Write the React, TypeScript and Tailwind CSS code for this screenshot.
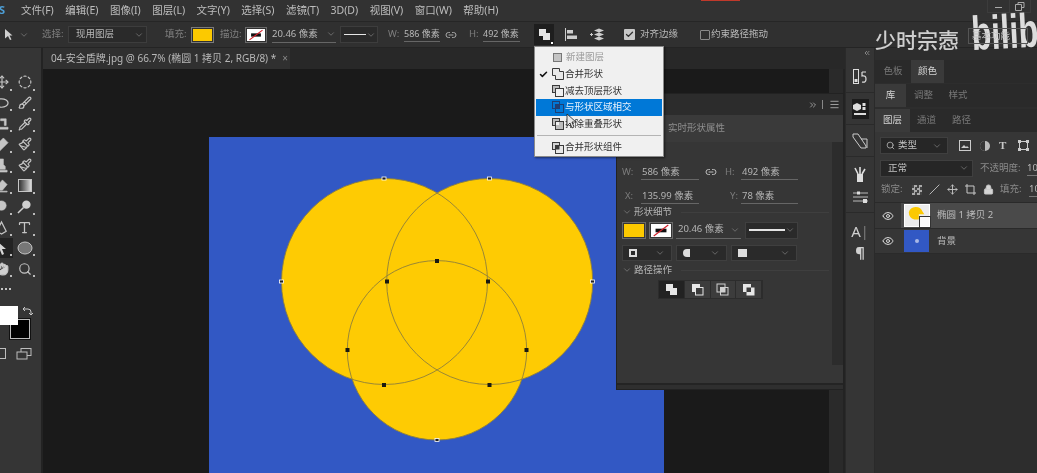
import React from "react";
import {
  Brush,
  ChevronDown,
  CircleDashed,
  Hand,
  Link2,
  Menu,
  Paintbrush,
  Pipette,
  Search,
  Type,
  Eye,
  Lock,
  Move,
  ChevronsRight,
  ChevronsLeft,
  Check,
  Slash,
} from "lucide-react";

const menus = ["文件(F)", "编辑(E)", "图像(I)", "图层(L)", "文字(Y)", "选择(S)", "滤镜(T)", "3D(D)", "视图(V)", "窗口(W)", "帮助(H)"];

function Chev({ className = "" }: { className?: string }) {
  return <ChevronDown size={10} strokeWidth={1.5} className={`text-[#8c8c8c] shrink-0 ${className}`} />;
}

function StrokeSwatch({ className = "" }: { className?: string }) {
  return (
    <div className={`border border-[#6a6a6a] p-[1px] ${className}`}>
      <svg viewBox="0 0 22 14" className="w-full h-full bg-white block">
        <rect x="5" y="5" width="12" height="4" fill="#111" />
        <line x1="3" y1="13" x2="19" y2="1" stroke="#d3202a" strokeWidth="1.3" />
      </svg>
    </div>
  );
}

function MenuIcon({ mode }: { mode: string }) {
  const s = "#3a3a3a";
  return (
    <svg width="12" height="12" viewBox="0 0 12 12" className="shrink-0">
      {mode === "new" && <rect x="1.5" y="1.5" width="8" height="8" fill="#c4c4c4" stroke="#777" />}
      {mode === "unite" && <path d="M.5.5h7v3h4v8h-8v-4h-3z" fill="#e8e8e8" stroke={s} />}
      {mode === "sub" && (
        <>
          <rect x=".5" y=".5" width="7" height="7" fill="#bdbdbd" stroke={s} />
          <rect x="3.5" y="3.5" width="8" height="8" fill="#f0f0f0" stroke={s} />
        </>
      )}
      {mode === "int" && (
        <>
          <rect x=".5" y=".5" width="7" height="7" fill="none" stroke="#1f3f74" />
          <rect x="3.5" y="3.5" width="8" height="8" fill="none" stroke="#1f3f74" />
          <rect x="3.5" y="3.5" width="4" height="4" fill="#1f3f74" />
        </>
      )}
      {mode === "exc" && (
        <>
          <rect x=".5" y=".5" width="7" height="7" fill="#bdbdbd" stroke={s} />
          <rect x="3.5" y="3.5" width="8" height="8" fill="#bdbdbd" stroke={s} />
          <rect x="4" y="4" width="3" height="3" fill="#f0f0f0" />
        </>
      )}
      {mode === "merge" && (
        <>
          <rect x=".5" y=".5" width="7" height="7" fill="#d4d4d4" stroke={s} />
          <rect x="3.5" y="3.5" width="8" height="8" fill="#e8e8e8" stroke={s} />
          <rect x="3.5" y="3.5" width="4" height="4" fill={s} />
        </>
      )}
    </svg>
  );
}

function PathOp({ mode, active }: { mode: string; active?: boolean }) {
  return (
    <div className={`w-[26px] h-full flex items-center justify-center border-r border-[#2c2c2c] ${active ? "bg-[#222222]" : "bg-[#3c3c3c]"}`}>
      <svg width="13" height="13" viewBox="0 0 13 13">
        {mode === "unite" && <path d="M1 1h7v4h4v7H5V8H1z" fill="#e6e6e6" />}
        {mode === "sub" && (
          <>
            <rect x="1" y="1" width="8" height="8" fill="#e6e6e6" />
            <rect x="4.5" y="4.5" width="7.5" height="7.5" fill="#3c3c3c" stroke="#e6e6e6" />
          </>
        )}
        {mode === "int" && (
          <>
            <rect x="1" y="1" width="8" height="8" fill="none" stroke="#d0d0d0" />
            <rect x="4.5" y="4.5" width="7.5" height="7.5" fill="none" stroke="#d0d0d0" />
            <rect x="4.5" y="4.5" width="4.5" height="4.5" fill="#d0d0d0" />
          </>
        )}
        {mode === "exc" && (
          <>
            <path d="M1 1h8v3.5H4.500v4.500H1z" fill="#e6e6e6" />
            <path d="M9 4.500h3.500v8h-8V9H9z" fill="#e6e6e6" />
          </>
        )}
      </svg>
    </div>
  );
}

function ValueField({ label, value, labelW, fieldW }: { label: string; value: string; labelW: string; fieldW: string }) {
  return (
    <div className="flex items-center">
      <span className={`text-[#7c7c7c] ${labelW}`}>{label}</span>
      <span className={`border-b border-[#666] text-[#b4b4b4] h-[15px] leading-[14px] pl-[1px] whitespace-nowrap ${fieldW}`}>{value}</span>
    </div>
  );
}

function Section({ title }: { title: string }) {
  return (
    <div className="flex items-center h-[14px] gap-[1px] text-[#b4b4b4]">
      <Chev />
      <span className="ml-[1px]">{title}</span>
      <div className="flex-1 border-t border-[#3f3f3f] ml-2" />
    </div>
  );
}

function Tabs({ items, active, widths }: { items: string[]; active: number; widths: string[] }) {
  return (
    <div className="flex h-[23px] bg-[#2a2a2a]">
      {items.map((t, i) => (
        <div key={t} className={`flex items-center justify-center ${widths[i]} ${i === active ? "bg-[#3a3a3a] text-[#d4d4d4]" : "text-[#777]"}`}>
          {t}
        </div>
      ))}
    </div>
  );
}

function Tool({ children, active }: { children?: React.ReactNode; active?: boolean }) {
  return (
    <div className={`h-[20.7px] w-[23px] flex items-center justify-center text-[#c4c4c4] relative ${active ? "bg-[#232323]" : ""}`}>
      {children}
      <span className="absolute right-[1px] bottom-[2px] w-[2px] h-[2px] bg-[#bbb]" />
    </div>
  );
}

function Shape({ d }: { d: string }) {
  return (
    <svg width="15" height="15" viewBox="0 0 16 16">
      <path d={d} fill="#c6c6c6" stroke="#c6c6c6" strokeWidth="0.6" />
    </svg>
  );
}

function LeftToolbar() {
  return (
    <div className="w-[43px] bg-[#353535] border-r-2 border-[#232323] shrink-0 overflow-hidden relative pt-[24px]">
      <div className="grid grid-cols-[23px_23px] -ml-[10px] gap-x-0 w-[46px]">
        <Tool><Move size={14} /></Tool>
        <Tool><CircleDashed size={14} /></Tool>
        <Tool>
          <svg width="15" height="13" viewBox="0 0 16 13">
            <ellipse cx="8" cy="6" rx="7" ry="4.500" fill="none" stroke="#c6c6c6" strokeWidth="1.3" />
          </svg>
        </Tool>
        <Tool><Brush size={14} /></Tool>
        <Tool><Shape d="M4 1v11h11v2H2V3H0V1h4zm3 2h6v7h-2V5H7z" /></Tool>
        <Tool><Pipette size={14} /></Tool>
        <Tool><Shape d="M10 1l5 5-9 9-5-5z" /></Tool>
        <Tool><Paintbrush size={14} /></Tool>
        <Tool><Shape d="M6 1h4v6l2 2v3H4V9l2-2zM2 13h12v2H2z" /></Tool>
        <Tool><Paintbrush size={14} /></Tool>
        <Tool><Shape d="M9 2l5 5-5 6H5L2 10zM2 14h12v1H2z" /></Tool>
        <Tool>
          <div className="w-[14px] h-[13px] border border-[#c6c6c6] bg-gradient-to-r from-[#333] to-[#ddd]" />
        </Tool>
        <Tool><Shape d="M8 2a5 5 0 0 1 5 5 5 5 0 0 1-5 5 5 5 0 0 1-5-5 5 5 0 0 1 5-5z" /></Tool>
        <Tool>
          <svg width="15" height="15" viewBox="0 0 16 16">
            <circle cx="10" cy="6" r="4.500" fill="#d0d0d0" />
            <line x1="7" y1="9" x2="1" y2="15" stroke="#d0d0d0" strokeWidth="1.6" />
          </svg>
        </Tool>
        <Tool>
          <svg width="15" height="15" viewBox="0 0 16 16">
            <path d="M3 12L8 2l5 10-5 3z" fill="none" stroke="#c6c6c6" strokeWidth="1.3" />
          </svg>
        </Tool>
        <Tool><Type size={15} /></Tool>
        <Tool active>
          <svg width="13" height="14" viewBox="0 0 13 14">
            <path d="M3 1l8 7H7l2 5-2 1-2-5-2 3z" fill="#d6d6d6" />
          </svg>
        </Tool>
        <Tool>
          <svg width="16" height="14" viewBox="0 0 16 14">
            <ellipse cx="8" cy="7" rx="7" ry="6" fill="#777" stroke="#c6c6c6" />
          </svg>
        </Tool>
        <Tool><Hand size={14} fill="#d0d0d0" /></Tool>
        <Tool><Search size={14} /></Tool>
        <div className="h-[20px] w-[23px] flex items-center justify-end gap-[2px] pr-[2px]">
          <span className="w-[2px] h-[2px] bg-[#c4c4c4]" />
          <span className="w-[2px] h-[2px] bg-[#c4c4c4]" />
          <span className="w-[2px] h-[2px] bg-[#c4c4c4]" />
        </div>
      </div>
      {/* foreground / background colours */}
      <div className="relative h-[33px] mt-[7px]">
        <div className="absolute left-[10px] top-[13px] w-[20px] h-[20px] bg-black border border-[#bbb] outline outline-[#111]" />
        <div className="absolute left-0 top-0 w-[18px] h-[19px] bg-white" />
        <svg className="absolute left-[22px] top-0" width="11" height="11" viewBox="0 0 11 11">
          <path d="M1 3h5q3 0 3 3v3M1 3l2-2M1 3l2 2M9 9l-2-2M9 9l2-2" fill="none" stroke="#c8c8c8" />
        </svg>
      </div>
      <div className="flex items-center justify-between mt-[8px] pr-[9px]">
        <div className="w-[6px] h-[11px] border border-l-0 border-[#bdbdbd]" />
        <svg width="16" height="14" viewBox="0 0 16 14">
          <rect x="5" y="1.500" width="10" height="7" fill="none" stroke="#bdbdbd" />
          <rect x="1" y="5" width="10" height="7" fill="#353535" stroke="#bdbdbd" />
        </svg>
      </div>
    </div>
  );
}

function DockIcon({ children, active, line }: { children: React.ReactNode; active?: boolean; line?: boolean }) {
  return (
    <div className={`flex items-center justify-center h-[32px] ${line ? "border-b border-[#2a2a2a]" : ""}`}>
      <div className={`flex items-center justify-center text-[#cfcfcf] ${active ? "bg-[#1c1c1c] w-[17px] h-[20px]" : "w-[16px] h-[18px]"}`}>{children}</div>
    </div>
  );
}

function Dock() {
  return (
    <div className="w-[30px] bg-[#353535] border-l border-r border-[#2a2a2a] shrink-0 pt-[13px] text-[11px] relative">
      <ChevronsLeft size={8} className="absolute right-[3px] top-[1px] text-[#aaa]" />
      <DockIcon line>
        <svg width="14" height="15" viewBox="0 0 14 15">
          <rect x="0.500" y="0.500" width="5" height="14" fill="none" stroke="#ddd" />
          <rect x="1.500" y="10" width="3" height="3" fill="#ddd" />
          <path d="M9 3h4M9 3v4q4-1 4 3t-4 3" fill="none" stroke="#ddd" strokeWidth="1.2" />
        </svg>
      </DockIcon>
      <DockIcon active line>
        <svg width="14" height="14" viewBox="0 0 14 14">
          <path d="M4 1l4 2v4L4 9 0 7V3z" fill="#ddd" />
          <rect x="9.500" y="1" width="3" height="3" fill="#ddd" />
          <rect x="9.500" y="5" width="3" height="3" fill="#ddd" />
          <rect x="1" y="11" width="12" height="2" fill="#ddd" />
        </svg>
      </DockIcon>
      <DockIcon line>
        <svg width="16" height="16" viewBox="0 0 16 16">
          <path d="M1 1h5l8 12v2H9L1 4zM9 6h6v9" fill="none" stroke="#ccc" />
        </svg>
      </DockIcon>
      <div className="h-[56px] border-b border-[#2a2a2a] flex flex-col items-center justify-center gap-[8px]">
        <svg width="14" height="17" viewBox="0 0 14 17">
          <rect x="4" y="8" width="6" height="8" fill="#ddd" />
          <path d="M5 8L2 2M7 8V1M9 8l3-5" stroke="#ddd" strokeWidth="1.6" />
        </svg>
        <svg width="15" height="12" viewBox="0 0 15 12">
          <path d="M0 2h15M0 6h15M0 10h15" stroke="#bbb" />
          <rect x="4" y="0.500" width="3" height="3" fill="#ddd" />
          <rect x="10" y="8" width="4" height="4" fill="#ddd" />
        </svg>
      </div>
      <div className="h-[27px] flex items-center justify-center text-[#d0d0d0] text-[15px] mt-[5px]">A<span className="font-light text-[#999]">|</span></div>
      <div className="flex items-center justify-center text-[#d0d0d0] text-[15px] font-bold -mt-[4px]">¶</div>
    </div>
  );
}

function RightPanel() {
  return (
    <div className="flex-1 bg-[#2d2d2d] text-[9.5px] pt-[12px] overflow-hidden">
      <Tabs items={["色板", "颜色"]} active={1} widths={["w-[36px]", "w-[33px]"]} />
      <div className="h-[1px]" />
      <Tabs items={["库", "调整", "样式"]} active={0} widths={["w-[31px]", "w-[35px]", "w-[34px]"]} />
      <div className="h-[2px]" />
      <Tabs items={["图层", "通道", "路径"]} active={0} widths={["w-[35px]", "w-[33px]", "w-[37px]"]} />
      <div className="bg-[#363636] w-[200px]">
        <div className="h-[27px] flex items-center pl-[5px]">
          <div className="w-[68px] h-[17px] bg-[#262626] border border-[#3f3f3f] flex items-center px-[5px] text-[#c2c2c2] gap-[3px]">
            <Search size={9} />
            <span className="flex-1">类型</span>
            <Chev />
          </div>
          <div className="flex items-center gap-[7px] ml-[11px] text-[#c8c8c8]">
            <svg width="12" height="11" viewBox="0 0 12 11">
              <rect x=".5" y=".5" width="11" height="10" fill="none" stroke="#ccc" />
              <path d="M2 8l3-3 2 2 1-1 2 2z" fill="#ccc" />
            </svg>
            <svg width="12" height="12" viewBox="0 0 12 12" className="ml-[1px]">
              <circle cx="6" cy="6" r="5" fill="#bbb" />
              <path d="M6 1a5 5 0 0 0 0 10z" fill="#363636" />
            </svg>
            <span className="font-bold text-[11px] leading-none ml-[1px] w-[12px] font-['Liberation_Serif',serif]">T</span>
            <svg width="11" height="11" viewBox="0 0 11 11">
              <rect x="1.500" y="1.500" width="8" height="8" fill="none" stroke="#ccc" />
              <rect x="0" y="0" width="3" height="3" fill="#ccc" />
              <rect x="8" y="0" width="3" height="3" fill="#ccc" />
              <rect x="0" y="8" width="3" height="3" fill="#ccc" />
              <rect x="8" y="8" width="3" height="3" fill="#ccc" />
            </svg>
          </div>
        </div>
        <div className="h-[18px] flex items-center pl-[5px]">
          <div className="w-[93px] h-[17px] bg-[#262626] border border-[#3f3f3f] flex items-center pl-[7px] pr-[3px] text-[#c2c2c2]">
            <span className="flex-1">正常</span>
            <Chev />
          </div>
          <span className="ml-[7px] text-[#8a8a8a] w-[47px]">不透明度:</span>
          <span className="text-[#b8b8b8] border-b border-[#777] w-[24px] leading-[14px]">100%</span>
        </div>
        <div className="h-[25px] flex items-center pl-[6px] text-[#8a8a8a]">
          <span className="w-[31px]">锁定:</span>
          <div className="flex items-center gap-[7px] text-[#c4c4c4]">
            <div className="w-[10px] h-[10px] bg-[repeating-conic-gradient(#aaa_0_25%,#444_0_50%)] bg-[length:5px_5px]" />
            <Slash size={11} />
            <Move size={11} />
            <svg width="11" height="11" viewBox="0 0 11 11">
              <path d="M2 0v9h9M0 2h9v9" fill="none" stroke="#c8c8c8" />
            </svg>
            <Lock size={11} fill="#d4d4d4" />
          </div>
          <span className="ml-[6px] w-[29px]">填充:</span>
          <span className="text-[#b8b8b8] border-b border-[#777] w-[24px] leading-[14px]">100%</span>
        </div>
        <div className="flex h-[26px] border-t border-[#2a2a2a]">
          <div className="w-[26px] flex items-center justify-center text-[#d8d8d8]"><Eye size={12} /></div>
          <div className="flex-1 bg-[#4a4a4a] flex items-center pl-[3px] text-[#bdbdbd]">
            <div className="w-[26px] h-[23px] border border-white bg-[#ececec] relative">
              <svg viewBox="0 0 26 23" className="w-full h-full">
                <path d="M4 8a8 8 0 0 1 15-1l2 3h-6v6h-5q-6-2-6-8z" fill="#fcc900" />
              </svg>
              <div className="absolute -right-[2px] -bottom-[2px] w-[12px] h-[12px] border border-[#333] bg-white/70" />
            </div>
            <span className="ml-[7px]">椭圆 1 拷贝 2</span>
          </div>
        </div>
        <div className="flex h-[26px] border-t border-b border-[#2a2a2a]">
          <div className="w-[26px] flex items-center justify-center text-[#d8d8d8]"><Eye size={12} /></div>
          <div className="flex-1 flex items-center pl-[3px] text-[#bdbdbd]">
            <div className="w-[25px] h-[22px] bg-[#3258c4] flex items-center justify-center">
              <span className="w-[4px] h-[4px] rounded-full bg-[#a9b8e6]" />
            </div>
            <span className="ml-[8px]">背景</span>
          </div>
        </div>
      </div>
    </div>
  );
}

function ShapeMenu() {
  const items = [
    { t: "合并形状", m: "unite", check: true },
    { t: "减去顶层形状", m: "sub" },
    { t: "与形状区域相交", m: "int", on: true },
    { t: "排除重叠形状", m: "exc" },
  ];
  return (
    <div className="absolute left-[534px] top-[46px] w-[130px] h-[111px] z-20 bg-[#f0f0f0] border border-[#8a8a8a] px-[1px] pt-[2px] text-[9.5px] text-[#333] shadow-[1px_1px_2px_rgba(0,0,0,0.5)]">
      <div className="h-[17px] flex items-center pl-[16px] gap-[1px] text-[#9a9a9a]">
        <MenuIcon mode="new" />
        <span className="ml-[1px]">新建图层</span>
      </div>
      {items.map((it) => (
        <div key={it.t} className={`h-[16.5px] flex items-center pl-[16px] relative ${it.on ? "bg-[#0078d7] text-[#e8f2fb]" : ""}`}>
          {it.check && <Check size={9} strokeWidth={4} className="absolute left-[3px] text-[#111]" />}
          <MenuIcon mode={it.m} />
          <span className="ml-[1px]">{it.t}</span>
        </div>
      ))}
      <div className="border-t border-[#b4b4b4] mx-[1px] mt-[3px] mb-[3px]" />
      <div className="h-[17px] flex items-center pl-[16px]">
        <MenuIcon mode="merge" />
        <span className="ml-[1px]">合并形状组件</span>
      </div>
    </div>
  );
}

function PropsPanel() {
  return (
    <div className="absolute left-[616px] top-[93px] w-[228px] h-[297px] z-10 bg-[#363636] border border-[#222] text-[9.5px] flex flex-col">
      <div className="h-[21px] bg-[#2c2c2c] flex items-center justify-end pr-[3px] gap-[4px] text-[#aaa] shrink-0">
        <ChevronsRight size={10} />
        <span className="w-[1px] h-[9px] bg-[#888]" />
        <Menu size={11} className="ml-[2px]" />
      </div>
      <div className="h-[27px] bg-[#3a3a3a] flex items-center pl-[51px] text-[#8e8e8e] shrink-0">实时形状属性</div>
      <div className="flex flex-1 min-h-0">
        <div className="flex-1 pl-[5px] pr-[3px] pt-[21px]">
          <div className="flex flex-col">
            <div className="flex items-center h-[18px]">
              <ValueField label="W:" value="586 像素" labelW="w-[19px]" fieldW="w-[58px]" />
              <Link2 size={12} className="text-[#bdbdbd] ml-[6px]" />
              <div className="ml-[8px]">
                <ValueField label="H:" value="492 像素" labelW="w-[16px]" fieldW="w-[57px]" />
              </div>
            </div>
            <div className="flex items-center h-[18px] mt-[6px]">
              <ValueField label="X:" value="135.99 像素" labelW="w-[19px] pl-[3px]" fieldW="w-[58px]" />
              <div className="w-[28px]" />
              <ValueField label="Y:" value="78 像素" labelW="w-[14px] pl-[3px]" fieldW="w-[57px]" />
            </div>
            <Section title="形状细节" />
            <div className="flex items-center mt-[2px] h-[18px]">
              <div className="w-[24px] h-[17px] border border-[#6a6a6a] p-[1px]"><div className="w-full h-full bg-[#fcc900]" /></div>
              <StrokeSwatch className="w-[24px] h-[17px] ml-[3px]" />
              <div className="w-[65px] h-[17px] ml-[3px] border-b border-[#666] flex items-center pl-[2px] pr-[1px] text-[#b4b4b4]">
                <span className="flex-1">20.46 像素</span>
                <Chev />
              </div>
              <div className="w-[53px] h-[17px] ml-[4px] bg-[#2a2a2a] border border-[#3f3f3f] flex items-center pl-[3px] pr-[2px]">
                <div className="flex-1 h-[1.5px] bg-[#e4e4e4]" />
                <Chev />
              </div>
            </div>
            <div className="flex items-center mt-[6px] h-[16px] gap-[4px]">
              <div className="w-[50px] h-[16px] bg-[#2a2a2a] border border-[#3f3f3f] flex items-center px-[6px] justify-between">
                <span className="w-[8px] h-[8px] border-2 border-[#ddd]" />
                <Chev />
              </div>
              <div className="w-[51px] h-[16px] bg-[#2a2a2a] border border-[#3f3f3f] flex items-center px-[6px] justify-between">
                <span className="w-[7px] h-[8px] bg-[#ddd] rounded-l-sm" />
                <Chev />
              </div>
              <div className="w-[66px] h-[16px] bg-[#2a2a2a] border border-[#3f3f3f] flex items-center px-[6px] justify-between">
                <span className="w-[9px] h-[8px] bg-[#ddd]" />
                <Chev />
              </div>
            </div>
            <div className="mt-[2px]"><Section title="路径操作" /></div>
            <div className="flex h-[19px] w-[105px] ml-[36px] mt-[3px] border border-[#2c2c2c]">
              <PathOp mode="unite" active />
              <PathOp mode="sub" />
              <PathOp mode="int" />
              <PathOp mode="exc" />
            </div>
          </div>
        </div>
        <div className="w-[11px] h-[223px] bg-[#2c2c2c] shrink-0" />
      </div>
      <div className="h-[6px] bg-[#2f2f2f] border-t-2 border-[#242424] shrink-0" />
    </div>
  );
}

function Circles() {
  const rings = [
    { cx: 384.5, cy: 281.500, r: 103 },
    { cx: 489.7, cy: 281.500, r: 103 },
    { cx: 437, cy: 350.300, r: 89.700 },
  ];
  const black = [[437, 261], [387, 281.500], [488, 281.500], [347.500, 350], [526.500, 350], [384, 385], [489.500, 385]];
  const white = [[384, 178.500], [489.500, 178.500], [281.500, 281.500], [592.500, 281.500], [437, 440]];
  return (
    <svg viewBox="209 137 455 336" className="w-[455px] h-[336px] block bg-[#3258c4]">
      {rings.map((c) => (
        <circle key={c.cx} cx={c.cx} cy={c.cy} r={c.r} fill="#fecb03" />
      ))}
      {rings.map((c) => (
        <circle key={c.cx} cx={c.cx} cy={c.cy} r={c.r} fill="none" stroke="#8d7f3c" strokeWidth="0.9" />
      ))}
      {black.map(([x, y]) => (
        <rect key={`${x}-${y}`} x={x - 2} y={y - 2} width="4" height="4" fill="#1a1a10" />
      ))}
      {white.map(([x, y]) => (
        <rect key={`${x}-${y}`} x={x - 2} y={y - 1.500} width="4" height="3" fill="#222" stroke="#fff" strokeWidth="0.8" />
      ))}
    </svg>
  );
}

export default function App() {
  return (
    <div className="w-[1037px] h-[473px] relative overflow-hidden flex flex-col bg-[#1a1a1a] font-['Noto_Sans','Noto_Sans_CJK_SC',sans-serif] blur-[0.3px]">
      {/* menu bar */}
      <div className="h-[22px] bg-[#323232] border-b border-[#262626] flex items-center text-[10.5px] text-[#bdbdbd] shrink-0 relative">
        <span className="text-[#4d9ed6] font-bold w-[21px] text-[11px] -ml-[1px]">S</span>
        <div className="flex gap-[11.5px] ml-[1px]">
          {menus.map((m) => (
            <span key={m}>{m}</span>
          ))}
        </div>
        <div className="absolute left-[701px] top-0 w-[39px] h-[1px] bg-[#c0392b]" />
        <div className="absolute right-[6px] top-0 flex h-[13px] border border-[#3c3c3c] border-t-0">
          <div className="w-[22px] flex items-center justify-center border-r border-[#3c3c3c]"><span className="w-[7px] h-[1.5px] bg-[#aaa] mt-[3px]" /></div>
          <div className="w-[20px] flex items-center justify-center">
            <svg width="10" height="9" viewBox="0 0 10 9"><path d="M3 2V.5h6v5H7M.5 2.500h6v6h-6z" fill="none" stroke="#aaa" /></svg>
          </div>
        </div>
      </div>

      {/* options bar */}
      <div className="h-[26px] bg-[#303030] border-b border-[#242424] flex items-center text-[9.5px] text-[#b8b8b8] shrink-0 relative">
        <svg width="10" height="13" viewBox="0 0 10 13" className="ml-[4px]">
          <path d="M1 1l7.500 6.500H5.500l2 4-1.500.5-2-4-3 2.500z" fill="#cfcfcf" />
        </svg>
        <Chev className="ml-[5px]" />
        <span className="ml-[13px] text-[#7e7e7e] w-[26px]">选择:</span>
        <div className="w-[79px] h-[17px] bg-[#2a2a2a] border border-[#3d3d3d] flex items-center pl-[7px] pr-[2px]">
          <span className="flex-1">现用图层</span>
          <Chev />
        </div>
        <span className="ml-[18px] text-[#7e7e7e] w-[26px]">填充:</span>
        <div className="w-[23px] h-[16px] border border-[#7a7a7a] p-[1px]"><div className="w-full h-full bg-[#fcc900]" /></div>
        <span className="ml-[6px] text-[#7e7e7e] w-[25px]">描边:</span>
        <StrokeSwatch className="w-[22px] h-[16px]" />
        <div className="ml-[5px] w-[64px] h-[16px] border-b border-[#666] flex items-center">
          <span className="flex-1">20.46 像素</span>
          <Chev />
        </div>
        <div className="ml-[4px] w-[38px] h-[17px] bg-[#2a2a2a] border border-[#3d3d3d] flex items-center pl-[3px] pr-[1px]">
          <div className="flex-1 h-[1.5px] bg-[#e6e6e6]" />
          <Chev />
        </div>
        <span className="ml-[10px] text-[#7e7e7e] w-[16px]">W:</span>
        <span className="w-[36px] border-b border-[#666] leading-[14px] whitespace-nowrap text-[9px]">586 像素</span>
        <Link2 size={12} className="ml-[5px] text-[#a8a8a8]" />
        <span className="ml-[12px] text-[#7e7e7e] w-[14px]">H:</span>
        <span className="w-[37px] border-b border-[#666] leading-[14px] whitespace-nowrap text-[9px]">492 像素</span>
        <div className="ml-[14px] w-[20px] h-[21px] bg-[#1e1e1e] flex items-center justify-center relative">
          <svg width="13" height="13" viewBox="0 0 13 13"><path d="M1 1h7v4h4v7H5V8H1z" fill="#e6e6e6" /></svg>
          <span className="absolute right-[1px] bottom-[1px] w-[2px] h-[2px] bg-white" />
        </div>
        <svg width="12" height="13" viewBox="0 0 12 13" className="ml-[11px]">
          <path d="M.5 0v13" stroke="#ccc" />
          <rect x="2" y="2" width="6" height="3.500" fill="#ccc" />
          <rect x="2" y="7.500" width="10" height="3.500" fill="#ccc" />
        </svg>
        <svg width="16" height="13" viewBox="0 0 16 13" className="ml-[13px]">
          <path d="M4 2.500l5-2 5 2-5 2zM4 6.500l5-2 5 2-5 2zM4 10.500l5-2 5 2-5 2z" fill="#ccc" />
          <path d="M0 6.500h3M1.500 5v3" stroke="#ccc" />
        </svg>
        <div className="ml-[18px] w-[11px] h-[11px] bg-[#c8c8c8] rounded-[1px] flex items-center justify-center">
          <Check size={9} strokeWidth={3.500} className="text-[#303030]" />
        </div>
        <span className="ml-[5px] w-[60px]">对齐边缘</span>
        <div className="w-[10px] h-[10px] border border-[#8a8a8a] rounded-[1px]" />
        <span className="ml-[1px]">约束路径拖动</span>
      </div>

      {/* main */}
      <div className="flex-1 flex min-h-0">
        <LeftToolbar />
        <div className="w-[802px] flex flex-col shrink-0">
          <div className="h-[21px] bg-[#282828] flex shrink-0">
            <div className="w-[247px] bg-[#303030] flex items-center pl-[8px] text-[10px] text-[#b8b8b8] whitespace-nowrap">
              <span>04-安全盾牌.jpg @ 66.7% (椭圆 1 拷贝 2, RGB/8) *</span>
              <span className="ml-[6px] text-[#888]">×</span>
            </div>
          </div>
          <div className="flex-1 flex min-h-0 overflow-hidden">
            <div className="flex-1 pl-[166px] pt-[68px]">
              <Circles />
            </div>
            <div className="w-[16px] bg-[#2a2a2a] shrink-0 border-r-2 border-[#232323]" />
          </div>
        </div>
        <Dock />
        <RightPanel />
      </div>

      <PropsPanel />
      <ShapeMenu />

      {/* mouse pointer */}
      <svg className="absolute left-[566px] top-[113px] z-30" width="11" height="17" viewBox="0 0 11 17">
        <path d="M1 1v12l3-3 2 5 2-1-2-5h4z" fill="#e8e8e8" stroke="#222" strokeWidth="0.8" />
      </svg>

      {/* video watermark */}
      <div className="absolute left-[970px] top-[8px] z-30 text-[48px] leading-[52px] font-bold text-[#dcdcdc] whitespace-nowrap origin-top-left rotate-[-3deg] scale-x-[0.68] font-['Liberation_Sans',sans-serif]">bilibili</div>
      <div className="absolute left-[968px] top-[28px] w-[60px] h-[16px] z-40 border border-[#555] pl-[3px] leading-[14px] text-[9.5px] text-[#c4c4c4]">基本功能</div>
      <div className="absolute left-[875px] top-[26px] z-30 text-[21px] leading-[28px] text-[#cfcfcf] font-medium whitespace-nowrap">少时宗悫</div>
    </div>
  );
}
